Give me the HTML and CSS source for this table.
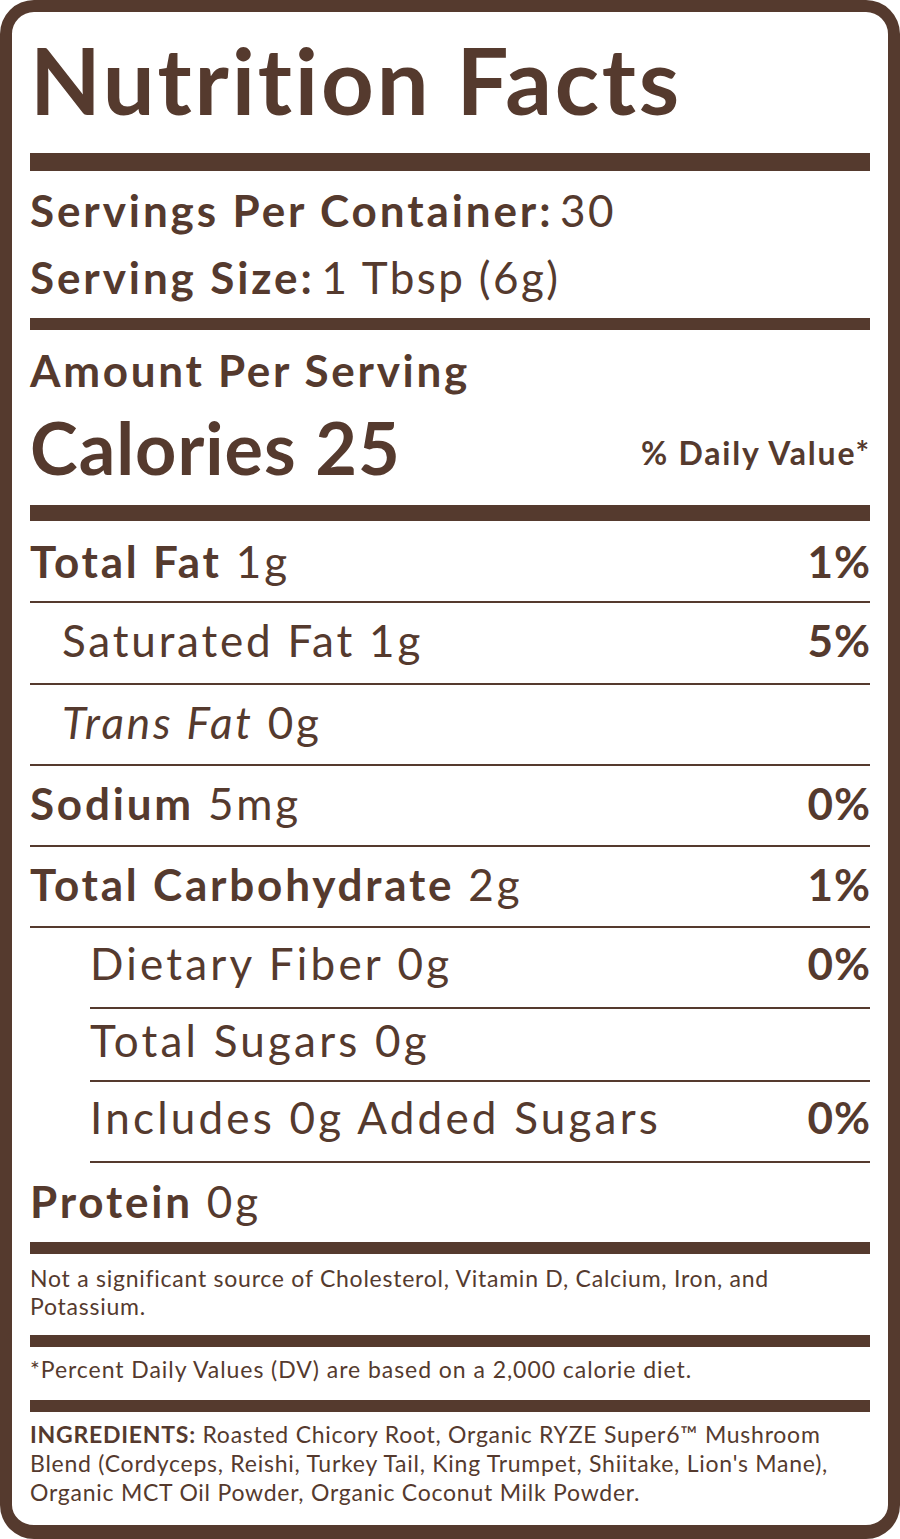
FILE: index.html
```html
<!DOCTYPE html>
<html lang="en">
<head>
<meta charset="utf-8">
<title>Nutrition Facts</title>
<link rel="stylesheet" href="styles.css">
</head>
<body>
<div class="label">
  <h1 class="title">Nutrition Facts</h1>
  <div class="bar bar-18"></div>
  <div class="servings">
    <div class="serv-line"><b>Servings Per Container:</b> <span class="val">30</span></div>
    <div class="serv-line"><b>Serving Size:</b> <span class="val">1 Tbsp (6g)</span></div>
  </div>
  <div class="bar bar-12"></div>
  <div class="amount">Amount Per Serving</div>
  <div class="calories-row">
    <div class="calories">Calories 25</div>
    <div class="dv">% Daily Value*</div>
  </div>
  <div class="bar bar-16"></div>

  <div class="row tall first"><span><b>Total Fat</b> 1g</span><b class="pct">1%</b></div>
  <div class="row tall ind1"><span>Saturated Fat 1g</span><b class="pct">5%</b></div>
  <div class="row ind1"><span><i>Trans Fat</i> 0g</span></div>
  <div class="row"><span><b>Sodium</b> 5mg</span><b class="pct">0%</b></div>
  <div class="row"><span><b>Total Carbohydrate</b> 2g</span><b class="pct">1%</b></div>
  <div class="row ind2"><span>Dietary Fiber 0g</span><b class="pct">0%</b></div>
  <div class="row ind2 short"><span>Total Sugars 0g</span></div>
  <div class="row ind2"><span>Includes 0g Added Sugars</span><b class="pct">0%</b></div>
  <div class="row last"><span><b>Protein</b> 0g</span></div>

  <div class="bar bar-12"></div>
  <p class="note">Not a significant source of Cholesterol, Vitamin D, Calcium, Iron, and<br>Potassium.</p>
  <div class="bar bar-12"></div>
  <p class="note single">*Percent Daily Values (DV) are based on a 2,000 calorie diet.</p>
  <div class="bar bar-12"></div>
  <p class="note ingredients"><b>INGREDIENTS:</b> Roasted Chicory Root, Organic RYZE Super6™ Mushroom<br>Blend (Cordyceps, Reishi, Turkey Tail, King Trumpet, Shiitake, Lion's Mane),<br>Organic MCT Oil Powder, Organic Coconut Milk Powder.</p>
</div>
</body>
</html>
```
FILE: styles.css
```css
* { box-sizing: border-box; }
html, body { margin: 0; padding: 0; background: #fff; }
body {
  font-family: Lato, "Liberation Sans", sans-serif;
  color: #553a2e;
  font-variant-ligatures: none;
}
.label {
  width: 900px;
  height: 1539px;
  border: 12px solid #553a2e;
  border-bottom-width: 14px;
  border-radius: 34px;
  padding: 0 18px;
  overflow: hidden;
}
.title {
  margin: 0;
  padding-top: 22px;
  font-size: 92px;
  line-height: 92px;
  font-weight: 700;
  letter-spacing: 2.8px;
  height: 141px;
  white-space: nowrap;
}
.bar { background: #553a2e; }
.bar-18 { height: 18px; }
.bar-16 { height: 16px; }
.bar-12 { height: 12px; }
.servings { padding: 6px 0 7px; }
.serv-line {
  font-size: 44px;
  line-height: 67px;
  font-weight: 400;
  letter-spacing: 2.4px;
  word-spacing: -7px;
  white-space: nowrap;
}
.serv-line b { font-weight: 700; letter-spacing: 2.9px; word-spacing: normal; }
.serv-line .val { word-spacing: normal; }
.amount {
  font-size: 44px;
  font-weight: 700;
  line-height: 44px;
  padding-top: 18px;
  letter-spacing: 2.7px;
}
.calories-row {
  display: flex;
  justify-content: space-between;
  align-items: baseline;
  margin-top: 5px;
  height: 108px;
}
.calories { font-size: 72px; font-weight: 700; line-height: 100px; letter-spacing: 1px; }
.dv { font-size: 32px; font-weight: 700; letter-spacing: 1.8px; position: relative; top: -10px; margin-right: -1px; }
.row {
  display: flex;
  justify-content: space-between;
  align-items: baseline;
  height: 81px;
  border-bottom: 2px solid #553a2e;
  font-size: 44px;
  line-height: 44px;
  padding-top: 15px;
  letter-spacing: 2.8px;
  white-space: nowrap;
}
.row b { font-weight: 700; }
.row i { font-style: italic; }
.pct { letter-spacing: 1px; margin-right: -1px; }
.tall { height: 82px; }
.first { padding-top: 18px; }
.ind1 { padding-left: 32px; }
.ind2 { margin-left: 60px; padding-top: 13px; letter-spacing: 3.2px; }
.short { height: 73px; padding-top: 9px; }
.last { border-bottom: none; height: 79px; padding-top: 16px; }
.note {
  margin: 0;
  font-size: 23px;
  line-height: 28px;
  letter-spacing: 0.75px;
  padding: 10px 0 15px;
  white-space: nowrap;
}
.note.single { padding: 8px 0 17px; letter-spacing: 0.95px; }
.note.ingredients { padding: 8px 0 0; line-height: 29px; }
.note b { font-weight: 700; }
```
